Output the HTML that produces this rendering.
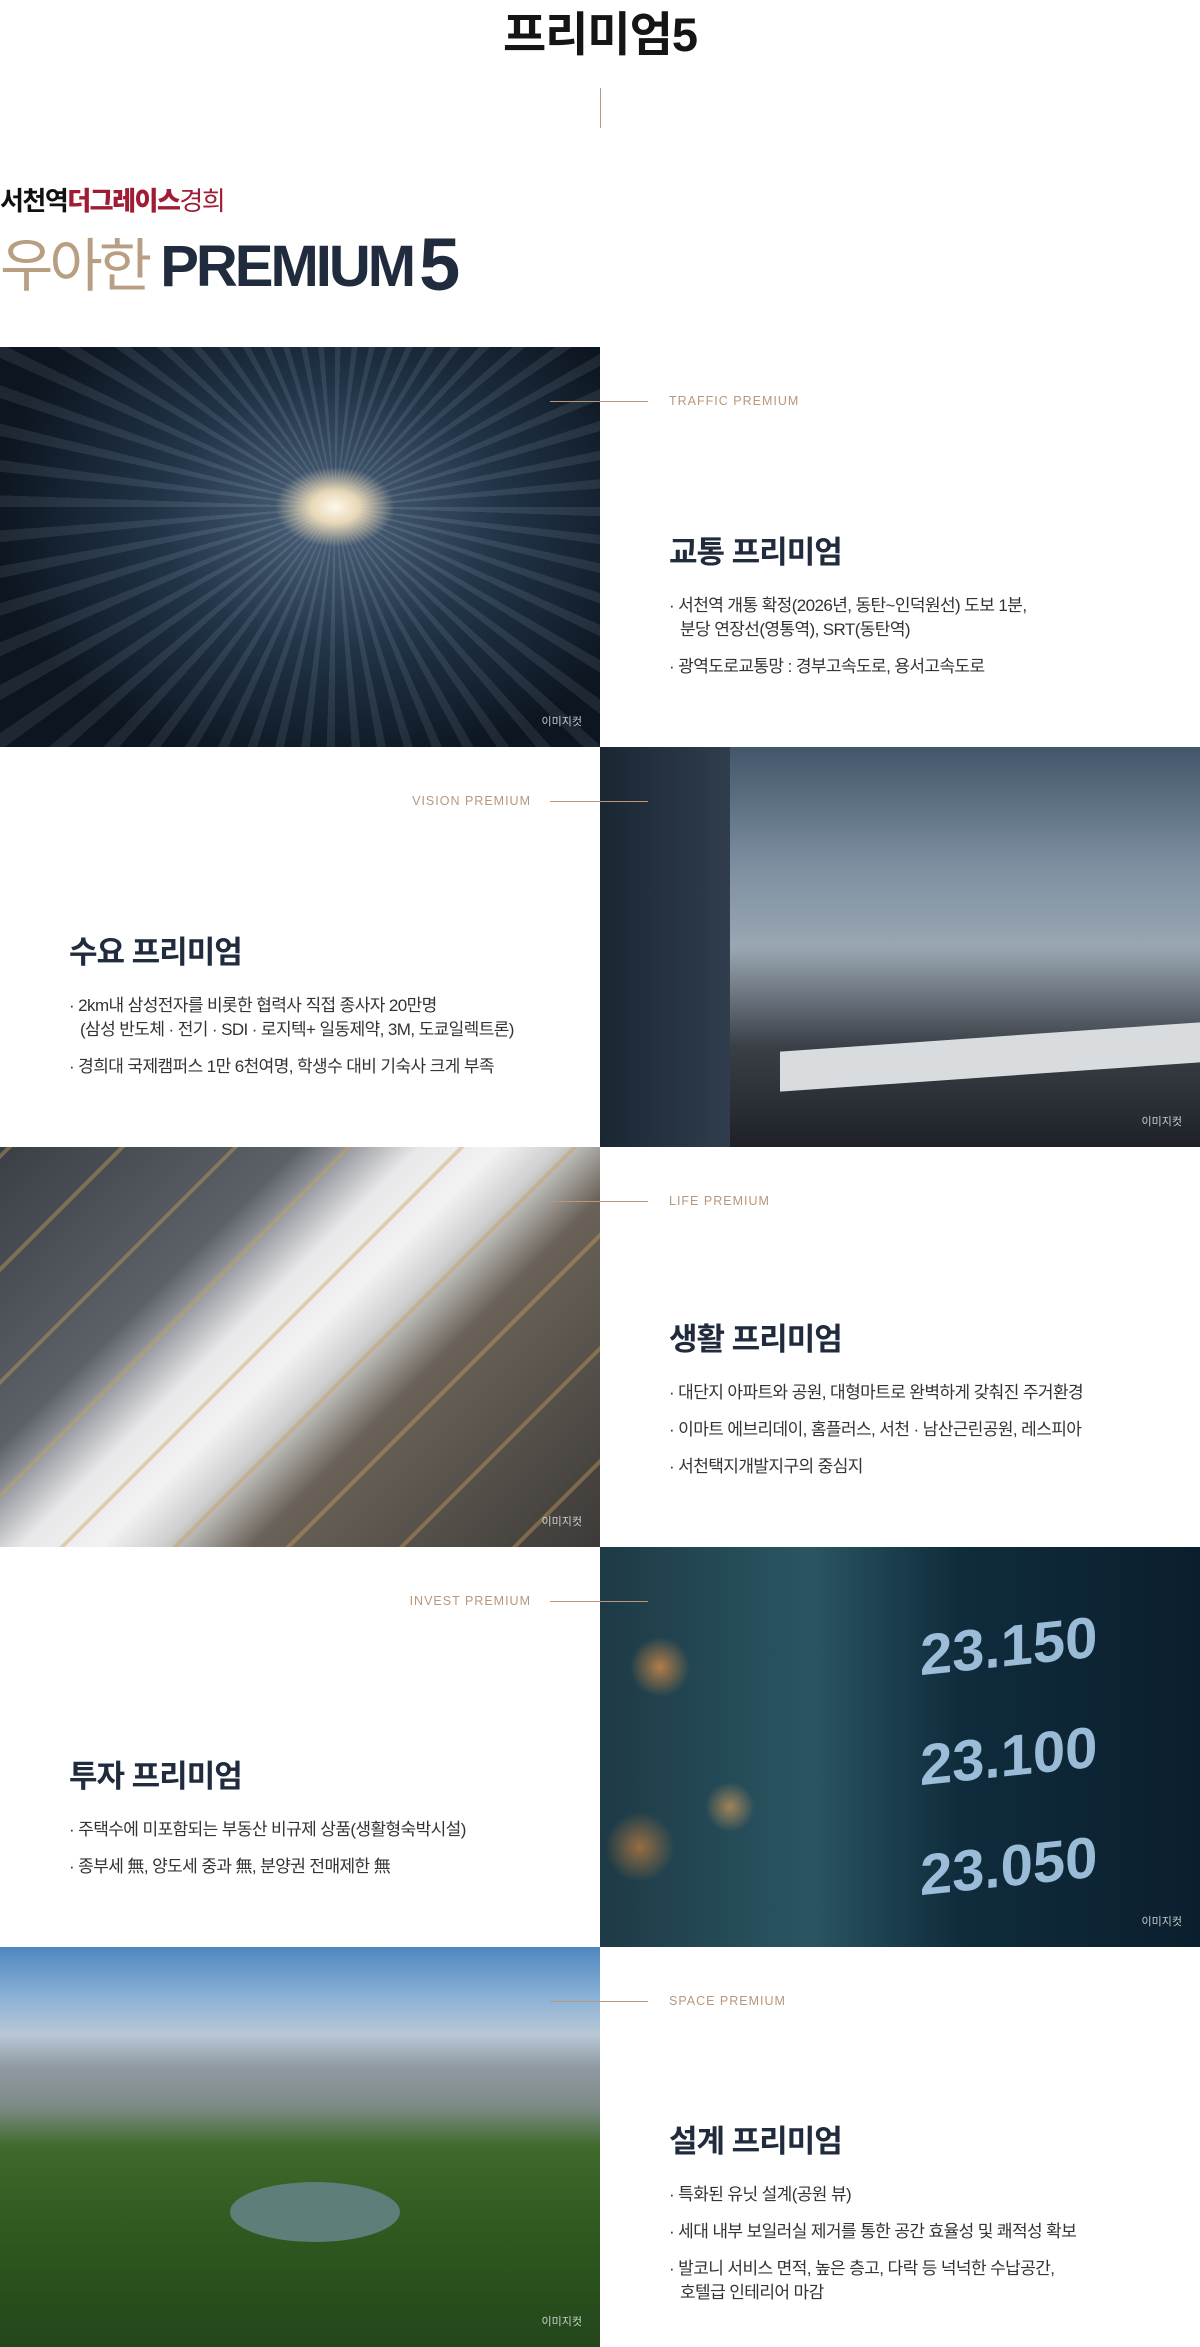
<!DOCTYPE html>
<html><head><meta charset="utf-8"><style>
*{margin:0;padding:0;box-sizing:border-box}
body{width:1200px;height:2347px;background:#fff;font-family:"Liberation Sans","Noto Sans CJK KR",sans-serif;overflow:hidden;position:relative}
.title{position:absolute;top:-4px;left:0;width:1200px;text-align:center;font-size:47px;font-weight:bold;color:#151515;letter-spacing:-1px}
.vline{position:absolute;left:600px;top:88px;width:1px;height:40px;background:#b89b7d}
.sub{position:absolute;left:0;top:181px;font-size:26px;font-weight:bold;letter-spacing:-1.5px;color:#111}
.sub b{color:#a01c35}
.sub span{color:#a01c35;font-weight:normal}
.big{position:absolute;left:0;top:218px;font-size:58px;font-weight:bold;letter-spacing:-4px;white-space:nowrap}
.big .k{color:#b89e82;font-weight:normal;letter-spacing:-4px}
.big .e{color:#202b3d;letter-spacing:-3px}
.big .f{color:#202b3d;font-size:74px;position:relative;top:4px;margin-left:6px}
.sec{position:absolute;left:0;width:1200px;height:400px}
.img{position:absolute;top:0;width:600px;height:400px;overflow:hidden}
.img .c{position:absolute;right:18px;bottom:18px;font-size:11px;color:rgba(255,255,255,.75)}
.txt{position:absolute;top:0;width:600px;height:400px}
.lab{position:absolute;top:47px;font-size:12.5px;letter-spacing:1px;color:#b8977a}
.ln{position:absolute;top:54px;width:98px;height:1px;background:#b8977a}
.blk{position:absolute;left:69px;bottom:68px}
.blk h3{font-size:31px;font-weight:bold;color:#202b3d;letter-spacing:-1px;margin-bottom:22px}
.blk p{font-size:17px;color:#333;line-height:24px;margin-top:13px;letter-spacing:-.6px;padding-left:11px;text-indent:-11px;white-space:nowrap}
.r .img{left:0}.r .txt{left:600px}
.r .ln{left:-50px}.r .lab{left:69px}
.l .img{left:600px}.l .txt{left:0}
.l .ln{left:550px}.l .lab{right:69px;text-align:right}
</style></head><body>
<div class="title">프리미엄5</div>
<div class="vline"></div>
<div class="sub">서천역<b>더그레이스</b><span>경희</span></div>
<div class="big"><span class="k">우아한</span> <span class="e">PREMIUM</span><span class="f">5</span></div>

<div class="sec r" style="top:347px">
<div class="img" style="background:radial-gradient(ellipse 60px 40px at 335px 160px,#fff8ea 0%,#e8d8b8 40%,transparent 100%),repeating-conic-gradient(from 0deg at 335px 160px,rgba(140,160,180,.15) 0deg 2deg,rgba(20,35,55,.15) 2deg 6deg),radial-gradient(ellipse 340px 260px at 330px 170px,#5a7088 0%,#24374b 50%,#0b131c 100%)"><div class="c">이미지컷</div></div>
<div class="txt"><div class="ln"></div><div class="lab">TRAFFIC PREMIUM</div>
<div class="blk"><h3>교통 프리미엄</h3><p>· 서천역 개통 확정(2026년, 동탄~인덕원선) 도보 1분,<br>분당 연장선(영통역), SRT(동탄역)</p><p>· 광역도로교통망 : 경부고속도로, 용서고속도로</p></div></div>
</div>

<div class="sec l" style="top:747px">
<div class="img" style="background:linear-gradient(180deg,#42556a 0%,#7d8fa0 30%,#9aa7b3 50%,#3a3f46 75%,#1e2228 100%)"><div style="position:absolute;left:0;top:0;width:130px;height:400px;background:linear-gradient(90deg,#1b2633,#2f3d4d)"></div><div style="position:absolute;left:180px;top:290px;width:420px;height:40px;background:#d9dcdf;transform:skewY(-4deg)"></div><div class="c">이미지컷</div></div>
<div class="txt"><div class="ln"></div><div class="lab">VISION PREMIUM</div>
<div class="blk"><h3>수요 프리미엄</h3><p>· 2km내 삼성전자를 비롯한 협력사 직접 종사자 20만명<br>(삼성 반도체 · 전기 · SDI · 로지텍+ 일동제약, 3M, 도쿄일렉트론)</p><p>· 경희대 국제캠퍼스 1만 6천여명, 학생수 대비 기숙사 크게 부족</p></div></div>
</div>

<div class="sec r" style="top:1147px">
<div class="img" style="background:linear-gradient(135deg,#3a3f46 0%,#5c6168 30%,#e8e8ea 42%,#f2f2f2 50%,#cfcfcf 56%,#6a6258 65%,#3c3a38 100%)"><div style="position:absolute;left:-50px;top:0;width:700px;height:400px;background:repeating-linear-gradient(135deg,transparent 0 40px,rgba(201,160,90,.7) 40px 44px,transparent 44px 80px);opacity:.6"></div><div class="c">이미지컷</div></div>
<div class="txt"><div class="ln"></div><div class="lab">LIFE PREMIUM</div>
<div class="blk"><h3>생활 프리미엄</h3><p>· 대단지 아파트와 공원, 대형마트로 완벽하게 갖춰진 주거환경</p><p>· 이마트 에브리데이, 홈플러스, 서천 · 남산근린공원, 레스피아</p><p>· 서천택지개발지구의 중심지</p></div></div>
</div>

<div class="sec l" style="top:1547px">
<div class="img" style="background:radial-gradient(circle 30px at 60px 120px,rgba(240,150,70,.7),transparent),radial-gradient(circle 25px at 130px 260px,rgba(240,170,90,.6),transparent),radial-gradient(circle 35px at 40px 300px,rgba(230,140,60,.6),transparent),linear-gradient(90deg,#1d3a45 0%,#2a5563 35%,#0f2c3c 60%,#0b1e2d 100%)"><div style="position:absolute;left:310px;top:0;width:290px;height:400px;font-size:58px;font-weight:bold;color:rgba(190,225,255,.8);line-height:110px;padding:40px 0 0 10px;transform:skewY(-6deg)">23.150<br>23.100<br>23.050</div><div class="c">이미지컷</div></div>
<div class="txt"><div class="ln"></div><div class="lab">INVEST PREMIUM</div>
<div class="blk"><h3>투자 프리미엄</h3><p>· 주택수에 미포함되는 부동산 비규제 상품(생활형숙박시설)</p><p>· 종부세 無, 양도세 중과 無, 분양권 전매제한 無</p></div></div>
</div>

<div class="sec r" style="top:1947px;height:400px">
<div class="img" style="height:400px;background:linear-gradient(180deg,#4f86bf 0%,#88b0d6 12%,#b9c8d6 22%,#8f9aa3 30%,#7d8a85 40%,#3f6a2c 50%,#2f5a20 70%,#23461a 100%)"><div style="position:absolute;left:230px;top:235px;width:170px;height:60px;border-radius:50%;background:#5c7f7a"></div><div class="c">이미지컷</div></div>
<div class="txt"><div class="ln"></div><div class="lab">SPACE PREMIUM</div>
<div class="blk" style="bottom:42px"><h3>설계 프리미엄</h3><p>· 특화된 유닛 설계(공원 뷰)</p><p>· 세대 내부 보일러실 제거를 통한 공간 효율성 및 쾌적성 확보</p><p>· 발코니 서비스 면적, 높은 층고, 다락 등 넉넉한 수납공간,<br>호텔급 인테리어 마감</p></div></div>
</div>
</body></html>
